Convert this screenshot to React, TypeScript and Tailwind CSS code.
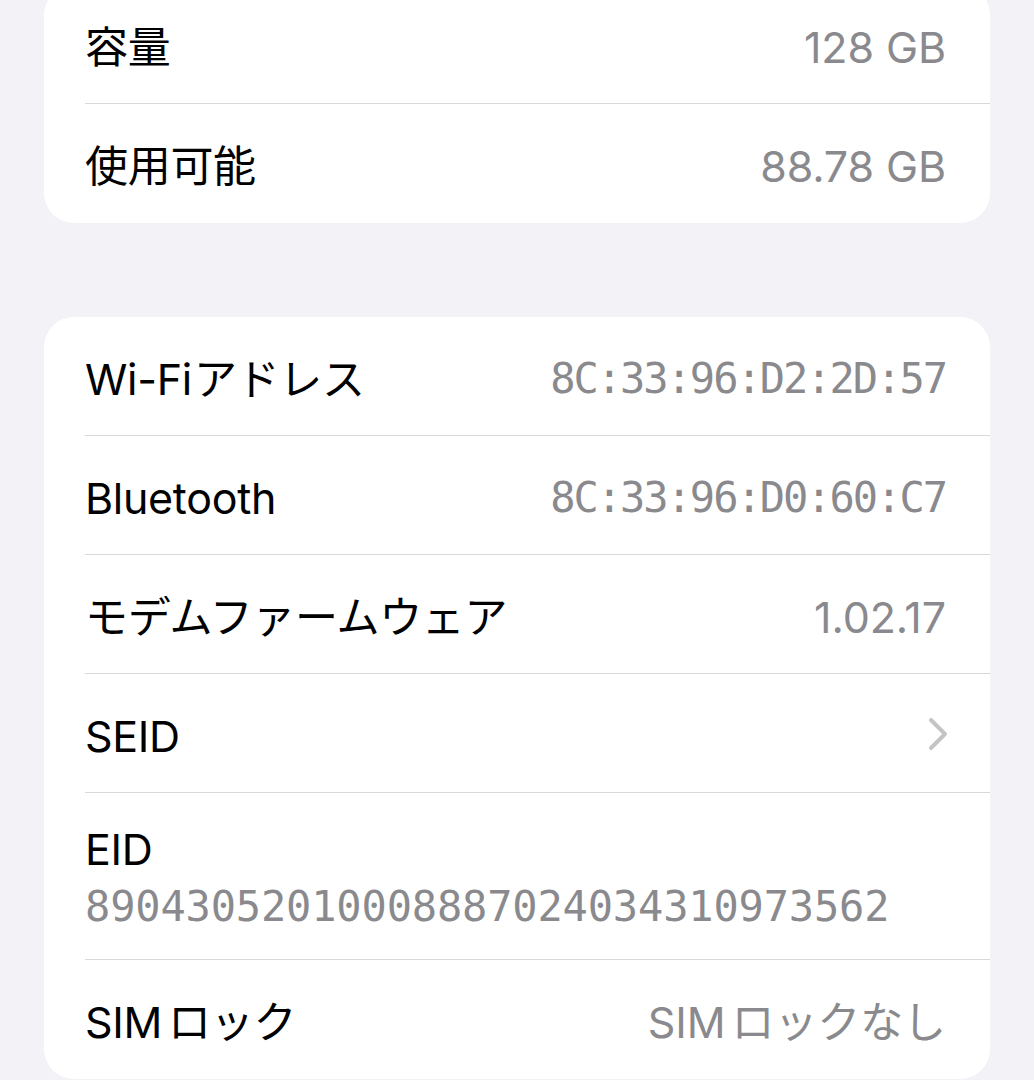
import React from 'react';

const sans = { fontFamily: '"Inter", "Noto Sans CJK JP", sans-serif' };
const mono = { fontFamily: '"DejaVu Sans Mono", monospace' };

interface RowProps {
  label: React.ReactNode;
  value?: React.ReactNode;
  isMono?: boolean;
  chevron?: boolean;
  last?: boolean;
}

const Chevron = () => (
  <svg width="20" height="34" viewBox="0 0 20 34" fill="none" className="mr-[-2px] mt-[-4px]">
    <polyline points="3,3 17,17 3,31" stroke="#c4c4c7" strokeWidth="4" strokeLinecap="round" strokeLinejoin="round" />
  </svg>
);

const Row: React.FC<RowProps> = ({ label, value, isMono, chevron, last }) => (
  <div className="pl-[41px]">
    <div
      className={`flex items-center justify-between h-[119px] pt-[5px] pr-[44px] ${last ? '' : 'border-b border-[#d9d9dd]'}`}
    >
      <span className="text-[43px] leading-[50px] text-black tracking-[-0.3px]">{label}</span>
      {value && isMono && (
        <span className="text-[42px] leading-[50px] text-[#8a8a8e] tracking-[-2px]" style={mono}>
          {value}
        </span>
      )}
      {value && !isMono && (
        <span className="text-[43px] leading-[50px] text-[#8a8a8e] tracking-[-0.1px]">{value}</span>
      )}
      {chevron && <Chevron />}
    </div>
  </div>
);

export default function App() {
  return (
    <div className="min-h-screen bg-[#f2f2f7] px-[44px] overflow-hidden" style={sans}>
      <div className="-mt-[15px] bg-white rounded-[30px]">
        <Row label="容量" value="128 GB" />
        <Row label="使用可能" value="88.78 GB" last />
      </div>

      <div className="mt-[94px] bg-white rounded-[30px]">
        <Row label={<>Wi-Fi<span className="ml-[2px]">アドレス</span></>} value="8C:33:96:D2:2D:57" isMono />
        <Row label="Bluetooth" value="8C:33:96:D0:60:C7" isMono />
        <Row label="モデムファームウェア" value="1.02.17" />
        <Row label="SEID" chevron />
        <div className="pl-[41px]">
          <div className="flex flex-col h-[167px] pt-[31px] border-b border-[#d9d9dd]">
            <span className="text-[43px] leading-[50px] text-black tracking-[-0.3px]">EID</span>
            <span className="mt-[8px] text-[42px] leading-[50px] text-[#8a8a8e] tracking-[-0.15px]" style={mono}>
              89043052010008887024034310973562
            </span>
          </div>
        </div>
        <Row
          label={<>SIM<span className="ml-[6px]">ロック</span></>}
          value={<>SIM<span className="ml-[6px]">ロックなし</span></>}
          last
        />
      </div>
    </div>
  );
}
